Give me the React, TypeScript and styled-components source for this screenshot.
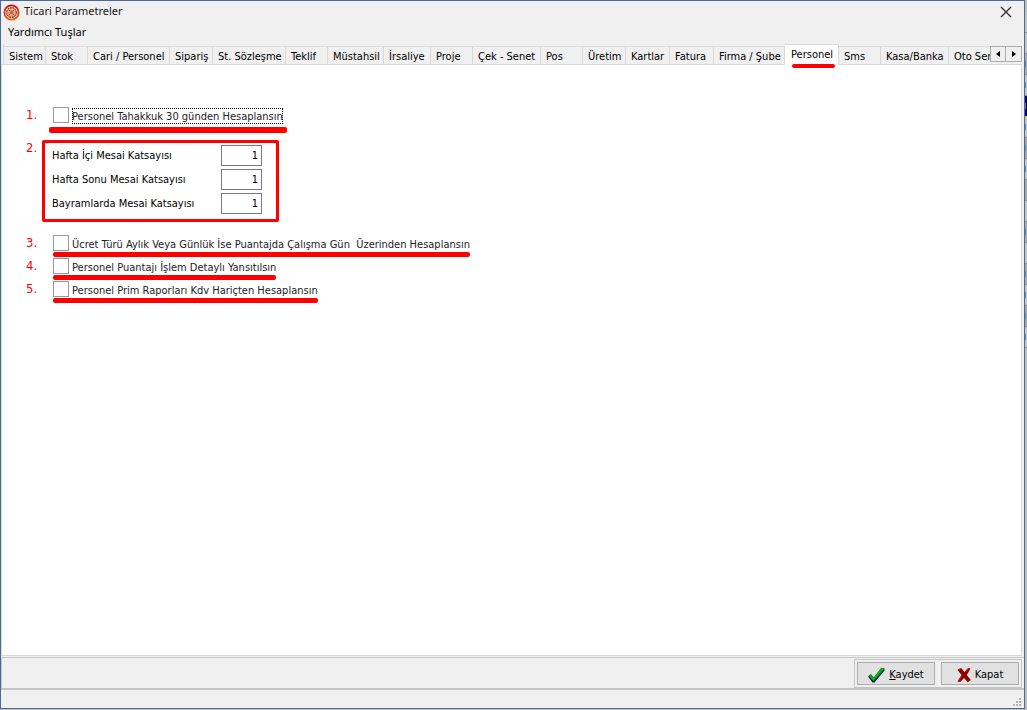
import React, { useState } from "react";
import styled, { createGlobalStyle, css } from "styled-components";

const GlobalStyle = createGlobalStyle`
  *, *::before, *::after { box-sizing: border-box; }
  body {
    margin: 0;
    background: #c0c0c0;
    color: #000;
    font: 11px/14px "DejaVu Sans Condensed", "DejaVu Sans", sans-serif;
  }
  button, input { font: inherit; color: inherit; }
`;

const Desktop = styled.div`
  display: flex;
  min-height: 100vh;
  padding-bottom: 1px;
`;

const Window = styled.main`
  flex: 1;
  min-width: 0;
  display: flex;
  flex-direction: column;
  background: #f0f0f0;
  border: 1px solid #4a6a9e;
`;

const TitleBar = styled.header`
  display: flex;
  align-items: center;
  gap: 4px;
  height: 22px;
  padding: 0 12px 0 2px;
  color: #222;
  font-family: "Noto Sans", sans-serif;
`;

const Title = styled.h1`
  flex: 1;
  margin: 0;
  font-size: 11px;
  font-weight: 400;
  line-height: 20px;
  height: 22px;
`;

const CloseButton = styled.button`
  display: flex;
  padding: 0;
  border: 0;
  background: none;
`;

const MenuBar = styled.nav`
  display: flex;
  height: 21px;
  padding: 0 7px;
`;

const MenuItem = styled.button`
  display: block;
  height: 18px;
  padding: 0;
  border: 0;
  background: none;
  font-family: "Noto Sans", sans-serif;
  line-height: 18px;
`;

const TabBar = styled.div`
  display: flex;
  align-items: flex-end;
  padding: 0 2px;
`;

const TabList = styled.div`
  flex: 1;
  min-width: 0;
  display: flex;
  align-items: flex-end;
  border-left: 1px solid #d9d9d9;
`;

const Tab = styled.button<{ $width: number; $active: boolean }>`
  flex: 0 0 ${p => p.$width}px;
  height: 18px;
  padding: 0 0 0 5px;
  border: solid #d9d9d9;
  border-width: 1px 1px 0 0;
  background: #f0f0f0;
  text-align: left;
  line-height: 18px;
  padding-top: 1px;
  white-space: nowrap;
  &:last-child { border-right: 0; flex-shrink: 1; }
  ${p => p.$active && css`
    position: relative;
    height: 21px;
    margin-bottom: -1px;
    padding-top: 0;
    padding-left: 6px;
    background: #fff;
    &::after {
      content: "";
      position: absolute;
      left: 7px;
      right: 3px;
      bottom: -3px;
      height: 4px;
      border-radius: 2px;
      background: #f00;
    }
  `}
`;

const TabScroller = styled.div`
  position: relative;
  display: flex;
  height: 18px;
  padding-bottom: 2px;
`;

const ScrollButton = styled.button`
  display: flex;
  align-items: center;
  justify-content: center;
  width: 16px;
  height: 16px;
  padding: 0;
  border: 1px solid #adadad;
  background: #f0f0f0;
  & + & { margin-left: -1px; width: 17px; }
`;

const TabPanel = styled.section`
  flex: 1;
  margin: 0 2px 1px 0;
  padding: 42px 24px 24px;
  background: #fff;
  border: 1px solid #d9d9d9;
`;

const FormRow = styled.div<{ $space: number }>`
  display: grid;
  grid-template-columns: 16px max-content;
  margin-bottom: ${p => p.$space}px;
`;

const StepNumber = styled.span`
  color: #f00;
  font-size: 13px;
  line-height: 16px;
`;

const CheckLabel = styled.label<{ $focused?: boolean }>`
  position: relative;
  display: flex;
  gap: 3px;
  height: 16px;
  margin-left: 11px;
  color: #222;
  white-space: pre;
  span {
    height: 16px;
    margin-top: 1px;
    line-height: 17px;
    outline: ${p => (p.$focused ? "1px dotted #000" : "none")};
    outline-offset: -1px;
  }
  &::after {
    content: "";
    position: absolute;
    left: ${p => (p.$focused ? -4 : 0)}px;
    right: ${p => (p.$focused ? -4 : 0)}px;
    top: ${p => (p.$focused ? 20 : 17)}px;
    height: ${p => (p.$focused ? 6 : 5)}px;
    border-radius: 2px;
    background: #f00;
  }
`;

const CheckBox = styled.input`
  appearance: none;
  width: 16px;
  height: 16px;
  margin: 0;
  border: 1px solid #9a9a9a;
  background: #fff;
  &:checked { box-shadow: inset 0 0 0 3px #fff; background: #333; }
`;

const RateGroup = styled.div`
  display: flex;
  flex-direction: column;
  gap: 3px;
  width: 237px;
  padding: 2px 14px 5px 7px;
  border: 3px solid #f00;
  border-radius: 2px;
`;

const RateField = styled.label`
  display: flex;
  align-items: center;
  justify-content: space-between;
`;

const RateInput = styled.input`
  width: 41px;
  height: 21px;
  padding: 0 3px;
  border: 1px solid #7a7a7a;
  background: #fff;
  text-align: right;
`;

const Footer = styled.footer`
  display: flex;
  justify-content: flex-end;
  height: 33px;
  padding: 1px 2px 0 0;
  border: solid #c6c6c6;
  border-width: 1px 0 2px 1px;
`;

const ButtonFrame = styled.div`
  display: flex;
  gap: 6px;
  padding: 2px;
  border: 1px solid #c6c6c6;
`;

const ActionButton = styled.button`
  display: flex;
  align-items: center;
  justify-content: center;
  gap: 4px;
  width: 78px;
  padding: 2px 0 0;
  border: 1px solid #adadad;
  background: #e1e1e1;
`;

const StatusBar = styled.div`
  display: flex;
  justify-content: flex-end;
  align-items: flex-end;
  height: 18px;
  padding: 0 2px 1px;
`;

const BackgroundGrid = styled.aside`
  width: 2px;
  padding-top: 12px;
  background: #c0c0c0;
`;

const GridLine = styled.div<{ $kind: string; $mark: boolean }>`
  display: flex;
  align-items: center;
  height: 21px;
  border-bottom: 1px solid #929292;
  background: ${p => (p.$kind === "dark" ? "#a9a9a9" : p.$kind === "selected" ? "#000070" : "#c6c6c6")};
  ${p => p.$kind === "selected" && css`border-bottom-color: #d8d040;`}
  &::before {
    content: "";
    width: 1px;
    height: 6px;
    background: ${p => (!p.$mark ? "transparent" : p.$kind === "selected" ? "#a05060" : "#4a9abc")};
  }
`;

const tabs: [string, number][] = [
  ["Sistem", 42], ["Stok", 42], ["Cari / Personel", 82], ["Sipariş", 43],
  ["St. Sözleşme", 73], ["Teklif", 42], ["Müstahsil", 56], ["İrsaliye", 47],
  ["Proje", 42], ["Çek - Senet", 68], ["Pos", 42], ["Üretim", 43],
  ["Kartlar", 44], ["Fatura", 44], ["Firma / Şube", 71], ["Personel", 54],
  ["Sms", 42], ["Kasa/Banka", 68], ["Oto Ser", 42],
];

const rates = ["Hafta İçi Mesai Katsayısı", "Hafta Sonu Mesai Katsayısı", "Bayramlarda Mesai Katsayısı"];

const gridLines: [string, boolean][] = [
  ["light", false], ["light", false], ["dark", true], ["light", true], ["selected", true],
  ["light", true], ["dark", true], ["light", true], ["dark", false], ["light", false],
  ["dark", true], ["light", false], ["dark", true], ["light", true], ["dark", true], ["light", true],
];

const AppLogo = () => (
  <svg width="17" height="17" viewBox="0 0 17 17" aria-hidden="true">
    <defs>
      <linearGradient id="ring" x1="0" y1="0" x2="0" y2="1">
        <stop offset="0" stopColor="#c01010" />
        <stop offset="1" stopColor="#f86008" />
      </linearGradient>
    </defs>
    <circle cx="8.5" cy="8.5" r="7.1" fill="#fff4ec" stroke="url(#ring)" strokeWidth="1.8" />
    <circle cx="8.5" cy="8.5" r="4.9" fill="#e0a888" stroke="#94402c" strokeWidth="1.2" strokeDasharray="2 0.6" />
    <path d="M6 6l5 5M11 6l-5 5" stroke="#a04c34" strokeWidth="1" />
    <circle cx="8.500" cy="8.500" r="2" fill="#c8684a" />
  </svg>
);

const CheckIcon = () => (
  <svg width="17" height="16" viewBox="0 0 17 16" aria-hidden="true">
    <path d="M0 9.500L3 8l2.800 3L13 2l3.500-.5v2L6.500 15.500H4.500z" fill="#001a50" />
    <path d="M.5 8.500L3 7l2.700 3.600L13 1l3 .2v1.300L6.200 13.800H4.700z" fill="#0a8c10" />
    <path d="M2 8.300l3.300 4L14.500 1.800" fill="none" stroke="#14b81a" strokeWidth="1.200" />
  </svg>
);

const CrossIcon = () => (
  <svg width="14" height="16" viewBox="0 0 14 16" aria-hidden="true">
    <path d="M.5 3l3.500-2 3.500 4L11 1l2.500.5L9.800 8l4 5-3 2.200L7 11 3.200 15 .5 14.500 4.500 8z" fill="#8c0000" />
    <path d="M1 2.800l2.800-1.200M11.500 1.300L8.500 5M1 14.200l3.500-4.700" stroke="#dd1818" strokeWidth="1" />
  </svg>
);

const GripIcon = () => (
  <svg width="9" height="9" viewBox="0 0 9 9" fill="#b4b4b4" aria-hidden="true">
    <path d="M6 0h2v2h-2zM3 3h2v2h-2zM6 3h2v2h-2zM0 6h2v2h-2zM3 6h2v2h-2zM6 6h2v2h-2z" />
  </svg>
);

function CheckRow({ step, text, focused, space = 7 }: { step: string; text: string; focused?: boolean; space?: number }) {
  return (
    <FormRow $space={space}>
      <StepNumber>{step}</StepNumber>
      <CheckLabel $focused={focused}>
        <CheckBox type="checkbox" />
        <span>{text}</span>
      </CheckLabel>
    </FormRow>
  );
}

export default function App() {
  const [active, setActive] = useState("Personel");
  return (
    <>
      <GlobalStyle />
      <Desktop>
        <Window>
          <TitleBar>
            <AppLogo />
            <Title>Ticari Parametreler</Title>
            <CloseButton aria-label="Kapat">
              <svg width="12" height="12" viewBox="0 0 12 12" stroke="#333" strokeWidth="1.400">
                <path d="M1 1l10 10M11 1L1 11" />
              </svg>
            </CloseButton>
          </TitleBar>
          <MenuBar>
            <MenuItem>Yardımcı Tuşlar</MenuItem>
          </MenuBar>
          <TabBar>
            <TabList role="tablist">
              {tabs.map(([name, width]) => (
                <Tab
                  key={name}
                  role="tab"
                  aria-selected={name === active}
                  $width={width}
                  $active={name === active}
                  onClick={() => setActive(name)}
                >
                  {name}
                </Tab>
              ))}
            </TabList>
            <TabScroller>
              <ScrollButton aria-label="Önceki">
                <svg width="4" height="6" viewBox="0 0 4 6"><path d="M4 0v6L0 3z" /></svg>
              </ScrollButton>
              <ScrollButton aria-label="Sonraki">
                <svg width="4" height="6" viewBox="0 0 4 6"><path d="M0 0v6l4-3z" /></svg>
              </ScrollButton>
            </TabScroller>
          </TabBar>
          <TabPanel role="tabpanel">
            <CheckRow step="1." text="Personel Tahakkuk 30 günden Hesaplansın" focused space={17} />
            <FormRow $space={13}>
              <StepNumber>2.</StepNumber>
              <RateGroup>
                {rates.map(name => (
                  <RateField key={name}>
                    {name}
                    <RateInput defaultValue="1" />
                  </RateField>
                ))}
              </RateGroup>
            </FormRow>
            <CheckRow step="3." text="Ücret Türü Aylık Veya Günlük İse Puantajda Çalışma Gün  Üzerinden Hesaplansın" />
            <CheckRow step="4." text="Personel Puantajı İşlem Detaylı Yansıtılsın" />
            <CheckRow step="5." text="Personel Prim Raporları Kdv Hariçten Hesaplansın" />
          </TabPanel>
          <Footer>
            <ButtonFrame>
              <ActionButton>
                <CheckIcon />
                <span><u>K</u>aydet</span>
              </ActionButton>
              <ActionButton>
                <CrossIcon />
                <span>Kapat</span>
              </ActionButton>
            </ButtonFrame>
          </Footer>
          <StatusBar>
            <GripIcon />
          </StatusBar>
        </Window>
        <BackgroundGrid>
          {gridLines.map(([kind, mark], i) => (
            <GridLine key={i} $kind={kind} $mark={mark} />
          ))}
        </BackgroundGrid>
      </Desktop>
    </>
  );
}
